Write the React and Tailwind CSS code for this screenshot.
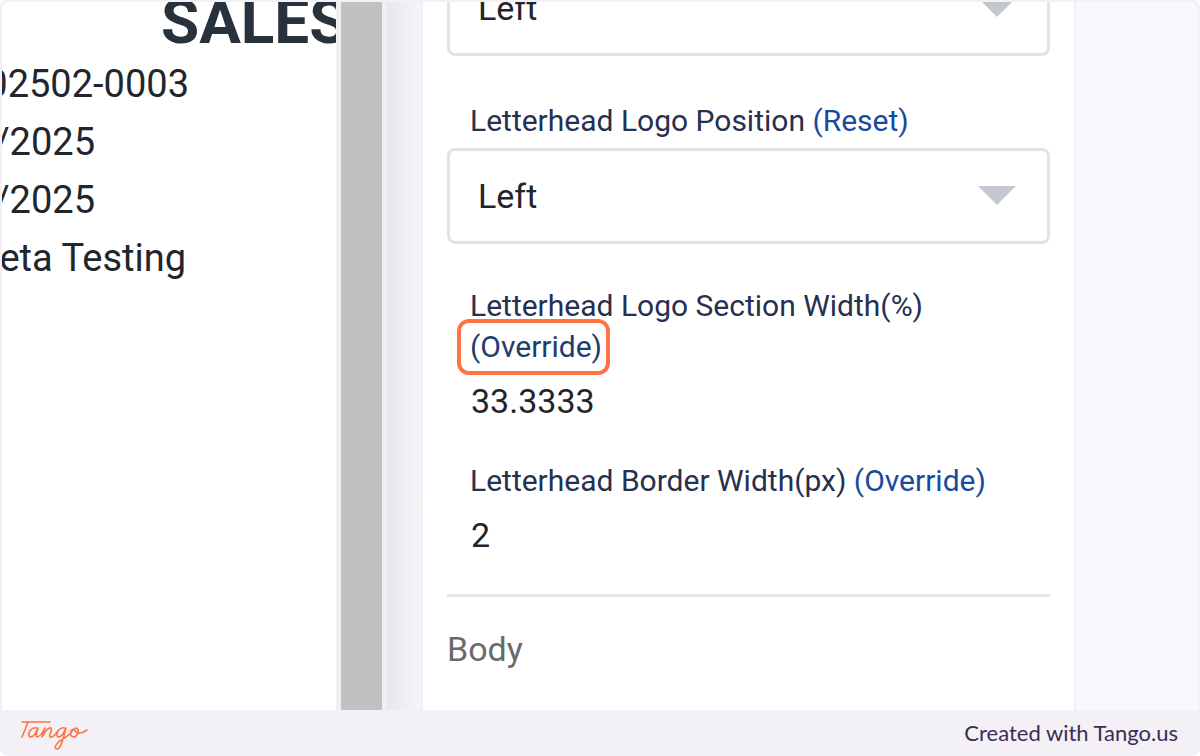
const documentLines = [
  { text: "02502-0003", width: "w-[187px]" },
  { text: "07/01/2025", width: "w-[93px]" },
  { text: "07/31/2025", width: "w-[93px]" },
  { text: "Beta Testing", width: "w-[184px]" },
];

function DocumentPreview() {
  return (
    <section className="w-[334px] shrink-0 overflow-hidden bg-white text-[#20262c]">
      <h1 className="-mt-[14px] pl-[159px] text-[62px] leading-[67px] font-bold text-[#28323c]">SALES</h1>
      {documentLines.map((line, i) => (
        <p
          key={i}
          className={`flex justify-end overflow-hidden text-[38px] leading-[58px] whitespace-nowrap ${line.width}`}
        >
          {line.text}
        </p>
      ))}
    </section>
  );
}

function SelectBox({ id, label }) {
  return (
    <div className="relative">
      <select
        id={id}
        aria-label={label}
        defaultValue="Left"
        className="block h-24 w-full appearance-none rounded-lg border-[3px] border-[#e2e2e2] bg-white px-7 text-[34px] text-[#212529]"
      >
        <option>Left</option>
        <option>Center</option>
        <option>Right</option>
      </select>
      <svg
        viewBox="0 0 38 19"
        className="pointer-events-none absolute top-[38px] right-[34px] h-[19px] w-[38px] fill-[#c3c8d0]"
        aria-hidden="true"
      >
        <path d="M0 0H38L19 19Z" />
      </svg>
    </div>
  );
}

function Caption({ id, text, action, highlighted }) {
  return (
    <div className="pl-[23px] text-[30px] leading-[41px] text-[#27304f]">
      <label htmlFor={id}>{text}</label>{" "}
      <a
        href="#"
        className={`relative inline-block ${highlighted ? "text-[#1d3d70]" : "text-[#164c9c]"}`}
      >
        {action}
        {highlighted && (
          <span className="absolute -top-[7px] -right-2 -bottom-2 -left-[13px] rounded-xl border-4 border-[#ff7442]" />
        )}
      </a>
    </div>
  );
}

function ValueField({ id, text, value, highlighted }) {
  return (
    <div className="flex flex-col gap-[10px]">
      <Caption id={id} text={text} action="(Override)" highlighted={highlighted} />
      <output id={id} className="block pl-6 text-[34px] leading-[48px] text-[#212529]">
        {value}
      </output>
    </div>
  );
}

function SettingsPanel() {
  return (
    <section className="min-w-0 flex-1 overflow-hidden border-x-2 border-[#f0f1f4] bg-white pr-6 pl-6">
      <div className="-mt-[42px] flex flex-col gap-11">
        <SelectBox id="alignment" label="Alignment" />
        <div className="flex flex-col gap-[7px]">
          <Caption id="logo-position" text="Letterhead Logo Position" action="(Reset)" />
          <SelectBox id="logo-position" />
        </div>
      </div>
      <div className="mt-[41px] flex flex-col gap-[35px]">
        <ValueField id="section-width" text="Letterhead Logo Section Width(%)" value="33.3333" highlighted />
        <ValueField id="border-width" text="Letterhead Border Width(px)" value="2" />
        <hr className="border-t-[3px] border-[#e6e6e6]" />
      </div>
      <h2 className="pt-7 text-[34px] leading-[48px] text-[#6a6a6a]">Body</h2>
    </section>
  );
}

function TangoLogo() {
  return (
    <svg
      viewBox="0 -2 70 36"
      className="h-9 w-[70px] fill-none stroke-[#ff7442] stroke-[1.6]"
      strokeLinecap="round"
      strokeLinejoin="round"
      role="img"
      aria-label="Tango"
    >
      <path d="M2 5H30" />
      <path d="M8 5C6 10 4 15 2 20" />
      <path d="M18 12C15 9 10 12 9 16C8 21 12 21 15 17L18 11C17 15 15 19 17 20C20 20 23 15 25 11L22 20C25 14 29 10 31 11C33 13 28 19 30 20C33 21 36 17 38 14" />
      <path d="M46 12C43 9 38 12 37 16C36 21 40 21 43 17L46 11C44 19 41 32 37 32C32 31 38 24 46 20C50 18 52 14 54 12C49 13 50 20 54 20C58 19 60 12 56 11C53 12 56 17 60 16C63 16 65 14 67 13" />
    </svg>
  );
}

export default function App() {
  return (
    <div className="bg-white">
      <div className="flex min-h-screen flex-col overflow-hidden rounded-lg bg-[#f3f0f6] px-[2px] pt-[2px] font-[Roboto,sans-serif]">
        <main className="flex flex-1 overflow-hidden rounded-t-lg bg-[#f7f9fe]">
          <DocumentPreview />
          <div className="w-[51px] shrink-0 border-x-[5px] border-[#f0f0f0] bg-[#c1c1c1]" />
          <div className="w-[34px] shrink-0 bg-linear-to-r from-[#e5e7eb] to-[#f5f6fb]" />
          <SettingsPanel />
          <div className="w-[122px] shrink-0" />
        </main>
        <footer className="flex h-[46px] shrink-0 items-center justify-between pr-5 pl-[18px]">
          <TangoLogo />
          <a href="#" className="font-[Lato,sans-serif] text-[22px] leading-8 text-[#3d2c54]">
            Created with Tango.us
          </a>
        </footer>
      </div>
    </div>
  );
}
